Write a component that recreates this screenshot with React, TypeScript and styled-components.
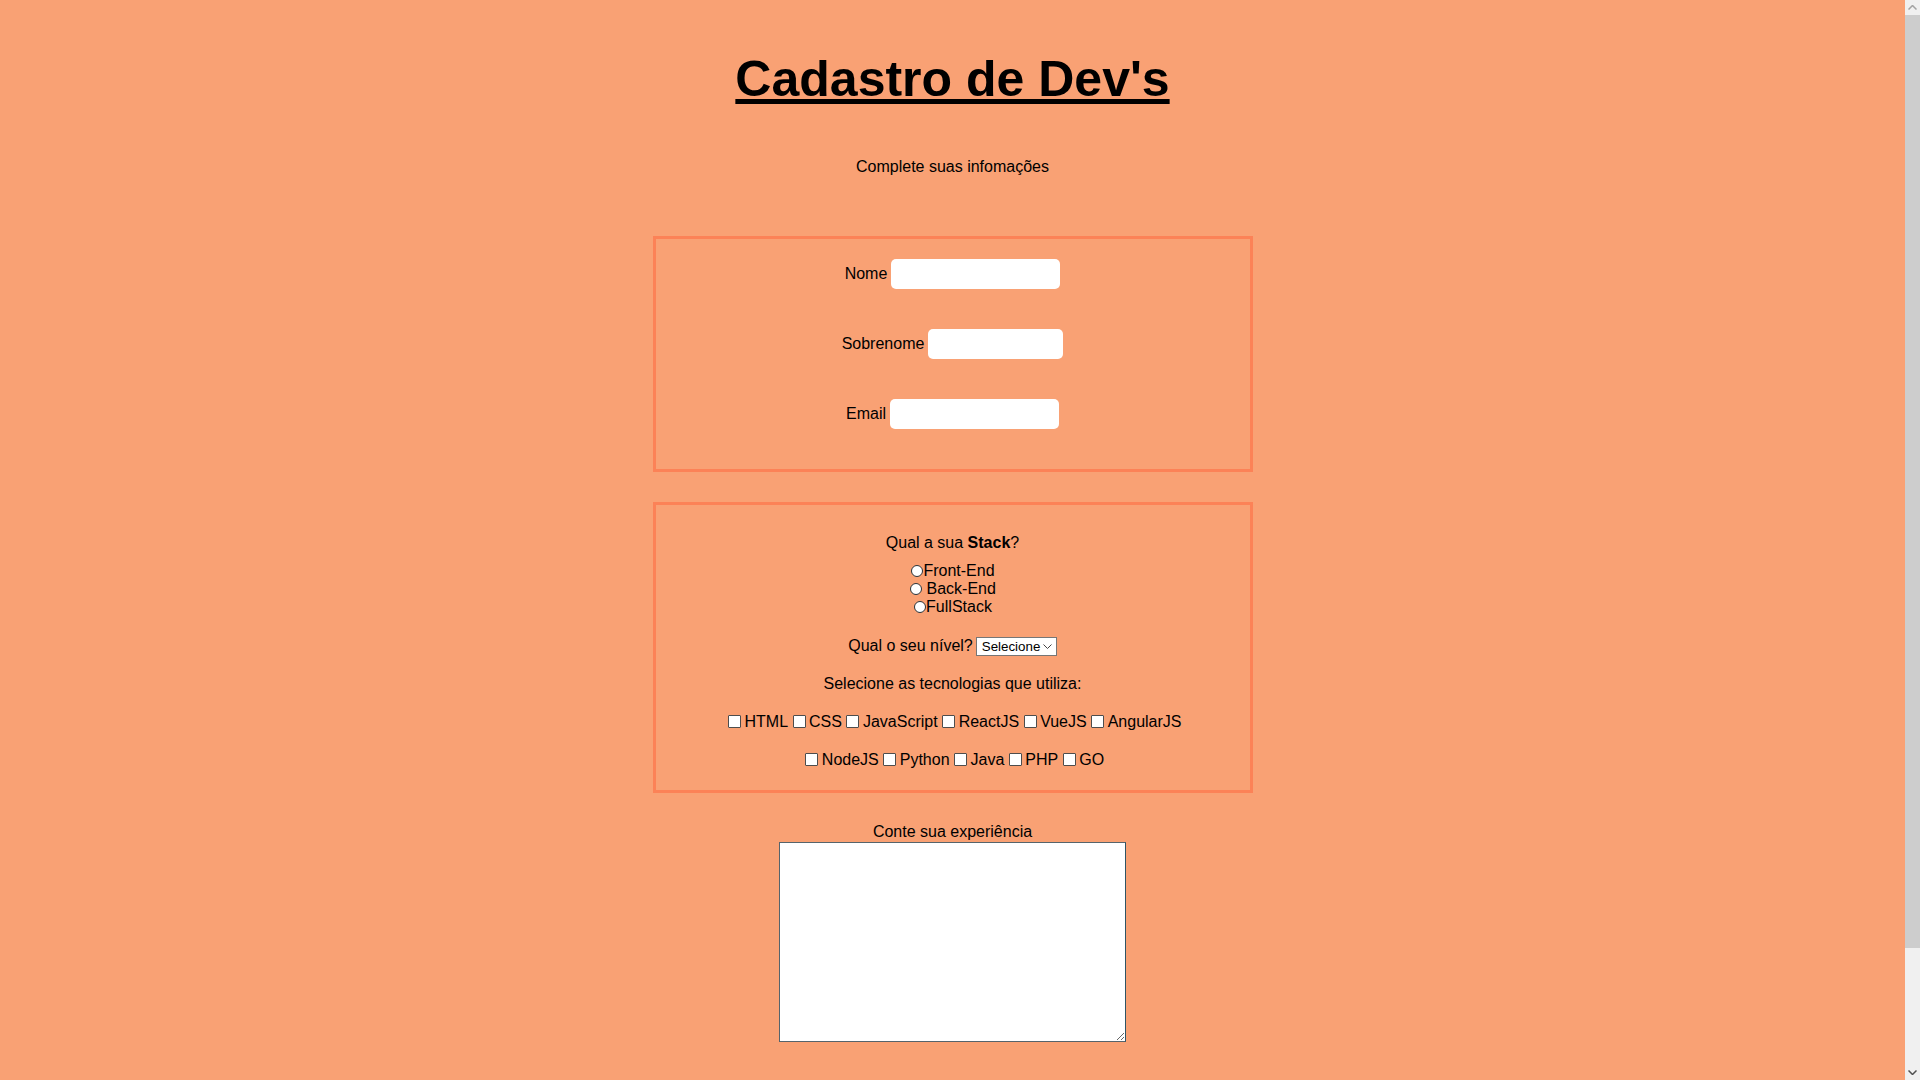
import React from "react";
import styled, { createGlobalStyle } from "styled-components";

const GlobalStyle = createGlobalStyle`
  html, body {
    margin: 0;
    padding: 0;
  }
  body {
    background: #f9a174;
    font-family: "Liberation Sans", Arial, sans-serif;
    font-size: 16px;
    color: #000;
  }
`;

const Page = styled.main`
  display: flex;
  flex-direction: column;
  align-items: center;
  padding: 50px 15px 170px 0;
`;

/* Browser-style vertical scrollbar shown at the right edge of the window */
const ScrollBar = styled.div`
  position: fixed;
  top: 0;
  right: 0;
  bottom: 0;
  width: 15px;
  display: flex;
  flex-direction: column;
  background: #f0f0f0;
`;

const ScrollArrow = styled.div`
  display: flex;
  align-items: center;
  justify-content: center;
  height: 15px;
  flex: none;
`;

const ScrollTrack = styled.div`
  flex: 1;
`;

const ScrollThumb = styled.div`
  height: 933px;
  background: #cdcdcd;
`;

const Title = styled.h1`
  margin: 0;
  font-size: 50px;
  font-weight: bold;
  line-height: normal;
  text-decoration: underline;
`;

const Subtitle = styled.p`
  margin: 50px 0 0;
  line-height: 18.4px;
`;

const Panel = styled.section<{ $top: number }>`
  box-sizing: border-box;
  width: 600px;
  margin-top: ${(p) => p.$top}px;
  border: 3px solid #fc8257;
`;

const IdentityPanel = styled(Panel)`
  display: flex;
  flex-direction: column;
  align-items: center;
  gap: 40px;
  padding: 20px 0 40px;
`;

const FieldRow = styled.div`
  display: flex;
  align-items: center;
  gap: 4px;
  height: 30px;
`;

const FieldLabel = styled.label`
  line-height: 18.4px;
`;

const TextInput = styled.input<{ $width: number }>`
  box-sizing: border-box;
  width: ${(p) => p.$width}px;
  height: 30px;
  padding: 0 6px;
  border: none;
  border-radius: 5px;
  background: #fff;
  font-family: "Liberation Sans", Arial, sans-serif;
  font-size: 14px;
  outline: none;
`;

const SkillsPanel = styled(Panel)`
  padding: 0 0 21px;
  text-align: center;
`;

const Question = styled.p`
  margin: 29px 0 0;
  line-height: 18.4px;
`;

const RadioGroup = styled.div`
  margin-top: 9.5px;
`;

const RadioLine = styled.label`
  display: block;
  height: 18px;
  line-height: 18px;
`;

const Radio = styled.input.attrs({ type: "radio" })`
  appearance: none;
  -webkit-appearance: none;
  box-sizing: border-box;
  width: 12px;
  height: 12px;
  margin: 0 0 0 1px;
  border: 1px solid #2b3338;
  border-radius: 50%;
  background: #fff;
  vertical-align: -1px;
  &:checked {
    box-shadow: inset 0 0 0 2px #fff;
    background: #0075ff;
  }
`;

const TechItem = styled.label`
  white-space: nowrap;
`;

const Check = styled.input.attrs({ type: "checkbox" })`
  appearance: none;
  -webkit-appearance: none;
  box-sizing: border-box;
  width: 13px;
  height: 13px;
  margin: 0 3.5px 0 4.5px;
  border: 1px solid #4d4d4d;
  border-radius: 1px;
  background: #fff;
  vertical-align: -1px;
  &:checked {
    background: #0075ff;
  }
`;

const LevelRow = styled.div`
  display: flex;
  justify-content: center;
  align-items: center;
  gap: 3px;
  height: 20px;
  margin-top: 20px;
`;

const SelectWrap = styled.span`
  position: relative;
  display: inline-flex;
`;

const LevelSelect = styled.select`
  box-sizing: border-box;
  width: 81px;
  height: 19px;
  padding: 0 14px 0 5px;
  border: 1px solid #767676;
  border-radius: 0;
  background: #fff;
  color: #000;
  font-family: "Liberation Sans", Arial, sans-serif;
  font-size: 13.333px;
  appearance: none;
  -webkit-appearance: none;
  outline: none;
`;

const Chevron = styled.svg`
  position: absolute;
  right: 5px;
  top: 7px;
  width: 9px;
  height: 5px;
  pointer-events: none;
`;

const TechLine = styled.div<{ $top: number }>`
  margin: ${(p) => p.$top}px 0 0;
  height: 18.4px;
  line-height: 18.4px;
`;

const ExperienceLabel = styled.label`
  display: block;
  margin-top: 30px;
  line-height: 18.4px;
`;

const ExperienceBox = styled.textarea`
  display: block;
  box-sizing: border-box;
  width: 347px;
  height: 200px;
  margin: 0;
  padding: 2px;
  border: 1px solid #56646c;
  border-right-color: #2f5565;
  background: #fff;
  font-family: "Liberation Mono", monospace;
  font-size: 13.333px;
`;

const techRow1 = ["HTML", "CSS", "JavaScript", "ReactJS", "VueJS", "AngularJS"];
const techRow2 = ["NodeJS", "Python", "Java", "PHP", "GO"];

function CheckList({ items, top }: { items: string[]; top: number }) {
  return (
    <TechLine $top={top}>
      {items.map((t) => (
        <TechItem key={t}>
          <Check name="tech" value={t} />
          {t}
        </TechItem>
      ))}
    </TechLine>
  );
}

export default function App() {
  return (
    <>
      <GlobalStyle />
      <Page>
        <Title>Cadastro de Dev's</Title>
        <Subtitle>Complete suas infomações</Subtitle>

        <IdentityPanel $top={60}>
          <FieldRow>
            <FieldLabel htmlFor="nome">Nome</FieldLabel>
            <TextInput id="nome" type="text" $width={169} />
          </FieldRow>
          <FieldRow>
            <FieldLabel htmlFor="sobrenome">Sobrenome</FieldLabel>
            <TextInput id="sobrenome" type="text" $width={135} />
          </FieldRow>
          <FieldRow>
            <FieldLabel htmlFor="email">Email</FieldLabel>
            <TextInput id="email" type="email" $width={169} />
          </FieldRow>
        </IdentityPanel>

        <SkillsPanel $top={30}>
          <Question>
            Qual a sua <strong>Stack</strong>?
          </Question>
          <RadioGroup>
            <RadioLine>
              <Radio name="stack" value="front" />
              Front-End
            </RadioLine>
            <RadioLine>
              <Radio name="stack" value="back" /> Back-End
            </RadioLine>
            <RadioLine>
              <Radio name="stack" value="full" />
              FullStack
            </RadioLine>
          </RadioGroup>
          <LevelRow>
            <span>Qual o seu nível?</span>
            <SelectWrap>
              <LevelSelect defaultValue="">
                <option value="">Selecione</option>
                <option value="junior">Júnior</option>
                <option value="pleno">Pleno</option>
                <option value="senior">Sênior</option>
              </LevelSelect>
              <Chevron viewBox="0 0 9 5" aria-hidden="true">
                <path d="M0.5 0.5 L4.5 4.5 L8.5 0.5" fill="none" stroke="#444" strokeWidth="1" />
              </Chevron>
            </SelectWrap>
          </LevelRow>
          <TechLine $top={19}>Selecione as tecnologias que utiliza:</TechLine>
          <CheckList items={techRow1} top={19} />
          <CheckList items={techRow2} top={20} />
        </SkillsPanel>

        <ExperienceLabel htmlFor="experiencia">Conte sua experiência</ExperienceLabel>
        <ExperienceBox id="experiencia" />
      </Page>

      <ScrollBar aria-hidden="true">
        <ScrollArrow>
          <svg width="9" height="5" viewBox="0 0 9 5">
            <path d="M0.5 4.5 L4.5 0.5 L8.5 4.5" fill="none" stroke="#a3a3a3" strokeWidth="1.5" />
          </svg>
        </ScrollArrow>
        <ScrollTrack>
          <ScrollThumb />
        </ScrollTrack>
        <ScrollArrow>
          <svg width="9" height="5" viewBox="0 0 9 5">
            <path d="M0.5 0.5 L4.5 4.5 L8.5 0.5" fill="none" stroke="#505050" strokeWidth="1.5" />
          </svg>
        </ScrollArrow>
      </ScrollBar>
    </>
  );
}
